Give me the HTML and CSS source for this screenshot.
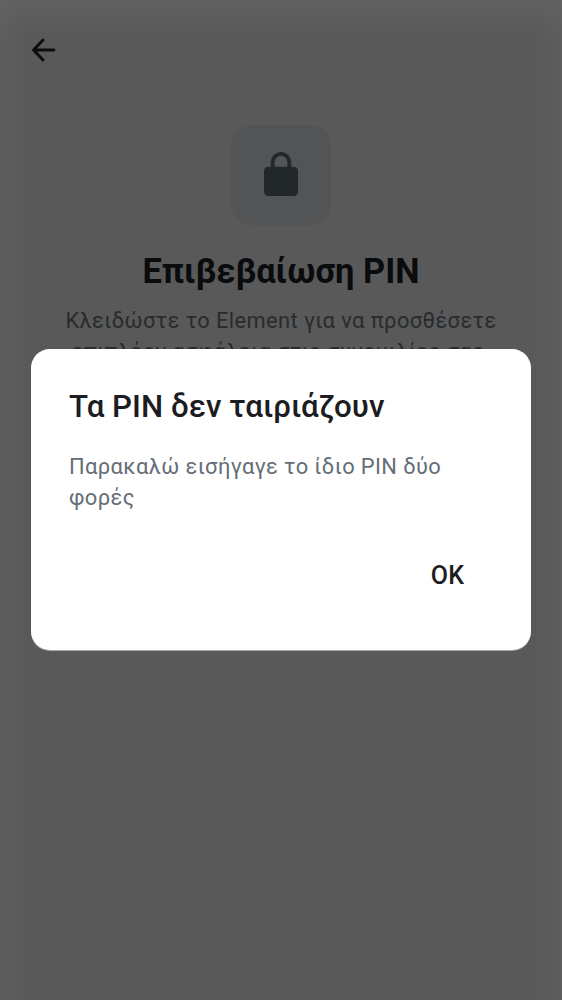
FILE: index.html
```html
<!DOCTYPE html>
<html lang="el">
<head>
<meta charset="utf-8">
<title>Επιβεβαίωση PIN</title>
<link rel="stylesheet" href="styles.css">
</head>
<body>
<main class="screen">
  <header class="topbar">
    <svg class="back" width="26" height="24" viewBox="0 0 26 24"><path d="M12 2 2.6 12 12 22M3 12H23" fill="none" stroke="#0b0d0e" stroke-width="2.9" stroke-linecap="round" stroke-linejoin="round"/></svg>
  </header>
  <div class="tile">
    <svg width="34" height="44" viewBox="0 0 34 44"><path d="M8.7 17V10.2a8.3 8.3 0 0 1 16.6 0V17" fill="none" stroke="#22272a" stroke-width="3.9"/><rect y="14.8" width="34" height="29.2" rx="4.2" fill="#22272a"/></svg>
  </div>
  <h1 class="heading">Επιβεβαίωση PIN</h1>
  <p class="intro"><span class="line">Κλειδώστε το Element για να προσθέσετε</span><span class="line">επιπλέον ασφάλεια στις συνομιλίες σας.</span></p>
</main>
<section class="dialog" role="alertdialog">
  <h2 class="title">Τα PIN δεν ταιριάζουν</h2>
  <p class="message">Παρακαλώ εισήγαγε το ίδιο PIN δύο φορές</p>
  <div class="actions"><button class="ok">OK</button></div>
</section>
</body>
</html>
```
FILE: styles.css
```css
* { box-sizing: border-box; margin: 0; padding: 0; }
body {
  position: relative;
  width: 562px;
  height: 1000px;
  overflow: hidden;
  font-family: Roboto, "Noto Sans", sans-serif;
}
.screen {
  display: flex;
  flex-direction: column;
  align-items: center;
  height: 1000px;
  background:
    linear-gradient(to bottom, rgba(99, 99, 99, 0.75), rgba(99, 99, 99, 0) 38px),
    linear-gradient(to right, rgba(99, 99, 99, 0.5), rgba(99, 99, 99, 0) 25px),
    linear-gradient(to left, rgba(99, 99, 99, 0.5), rgba(99, 99, 99, 0) 25px),
    #595959;
}
.topbar {
  width: 100%;
  height: 125px;
  padding: 38px 31px;
}
.back { display: block; }
.tile {
  display: flex;
  justify-content: center;
  width: 100px;
  height: 100px;
  padding-top: 27px;
  border-radius: 21px;
  background: #535456;
}
.heading {
  margin-top: 25px;
  font-size: 34.4px;
  line-height: 42px;
  font-weight: 700;
  color: #0a0b0d;
  white-space: nowrap;
}
.intro {
  margin-top: 13px;
  font-size: 21.9px;
  line-height: 31px;
  letter-spacing: 0.39px;
  text-align: center;
  color: #282b2e;
}
.line { display: block; white-space: nowrap; }
.dialog {
  position: absolute;
  left: 31px;
  top: 349px;
  width: 500px;
  height: 301px;
  padding: 39px 38px 38px;
  border-radius: 19px;
  background: #fff;
  box-shadow: 0 1px 0 #a8a8a8;
}
.title {
  font-size: 31.25px;
  line-height: 38px;
  font-weight: 500;
  letter-spacing: 0.04px;
  color: #1b1d22;
  white-space: nowrap;
}
.message {
  margin-top: 25px;
  font-size: 21.9px;
  line-height: 31.25px;
  letter-spacing: 0.39px;
  color: #656d77;
}
.actions {
  display: flex;
  justify-content: flex-end;
  margin-top: 31px;
}
.ok {
  padding: 0 28.6px;
  border: 0;
  background: none;
  font: 500 25px/62px Roboto, sans-serif;
  letter-spacing: 0.3px;
  color: #1b1d22;
}
```
